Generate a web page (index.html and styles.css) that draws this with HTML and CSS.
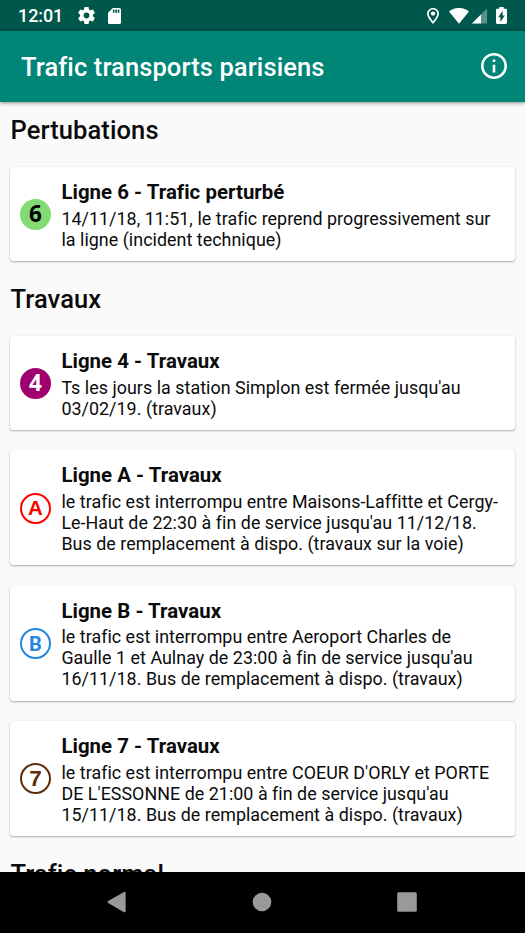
FILE: index.html
```html
<!DOCTYPE html>
<html lang="fr">
<head>
<meta charset="utf-8">
<title>Trafic transports parisiens</title>
<link rel="stylesheet" href="styles.css">
</head>
<body>
<div class="screen">
  <div class="status">
    <span class="clock">12:01</span>
    <svg class="gear" viewBox="2 2 20 20"><path d="M19.43 12.98c.04-.32.07-.64.07-.98s-.03-.66-.07-.98l2.11-1.65c.19-.15.24-.42.12-.64l-2-3.46c-.12-.22-.39-.3-.61-.22l-2.49 1c-.52-.4-1.08-.73-1.69-.98l-.38-2.65C14.46 2.18 14.25 2 14 2h-4c-.25 0-.46.18-.49.42l-.38 2.65c-.61.25-1.17.59-1.69.98l-2.49-1c-.23-.09-.49 0-.61.22l-2 3.46c-.13.22-.07.49.12.64l2.11 1.65c-.04.32-.07.65-.07.98s.03.66.07.98l-2.11 1.65c-.19.15-.24.42-.12.64l2 3.46c.12.22.39.3.61.22l2.49-1c.52.4 1.08.73 1.69.98l.38 2.65c.03.24.24.42.49.42h4c.25 0 .46-.18.49-.42l.38-2.65c.61-.25 1.17-.59 1.69-.98l2.49 1c.23.09.49 0 .61-.22l2-3.46c.12-.22.07-.49-.12-.64l-2.11-1.65zM12 15.5c-1.93 0-3.5-1.57-3.5-3.5s1.57-3.5 3.5-3.5 3.500 1.570 3.500 3.500-1.570 3.500-3.500 3.500z"/></svg>
    <svg class="sd" viewBox="4 2 16 20" preserveAspectRatio="none"><path d="M18 2h-8L4.020 8 4 20c0 1.100.9 2 2 2h12c1.100 0 2-.9 2-2V4c0-1.100-.9-2-2-2zm-6 6h-2V4h2v4zm3 0h-2V4h2v4zm3 0h-2V4h2v4z"/></svg>
    <svg class="pin" viewBox="5 2 14 20" preserveAspectRatio="none"><path d="M12 2C8.130 2 5 5.130 5 9c0 5.250 7 13 7 13s7-7.750 7-13c0-3.870-3.130-7-7-7zM7 9c0-2.760 2.240-5 5-5s5 2.240 5 5c0 2.880-2.880 7.190-5 9.880C9.920 16.210 7 11.850 7 9z"/><circle cx="12" cy="9" r="2.700"/></svg>
    <svg class="wifi" viewBox="0 0 20 16"><path d="M0 3.500C5.800-1.200 14.200-1.200 20 3.500L10 15.800z"/></svg>
    <svg class="signal" viewBox="0 0 16 16"><path opacity=".35" d="M0 16 16 0v16z"/><path d="M0 16 9.500 6.500V16z"/></svg>
    <svg class="battery" viewBox="7 2 10 20" preserveAspectRatio="none"><path d="M15.670 4H14V2h-4v2H8.330C7.600 4 7 4.600 7 5.330v15.330C7 21.400 7.600 22 8.330 22h7.330c.74 0 1.340-.6 1.340-1.330V5.330C17 4.600 16.400 4 15.670 4zM11 19.500V14H9l4-7.500V12h2z"/></svg>
  </div>
  <header class="appbar">
    <h1>Trafic transports parisiens</h1>
    <svg class="info" viewBox="2 2 20 20"><path d="M11 17h2v-6h-2v6zm1-15C6.480 2 2 6.480 2 12s4.480 10 10 10 10-4.480 10-10S17.520 2 12 2zm0 18c-4.410 0-8-3.590-8-8s3.590-8 8-8 8 3.590 8 8-3.590 8-8 8zM11 9h2V7h-2v2z"/></svg>
  </header>
  <main class="list">
    <h2>Pertubations</h2>
    <article class="card">
      <span class="badge l6">6</span>
      <div><h3>Ligne 6 - Trafic perturbé</h3>
      <p>14/11/18, 11:51, le trafic reprend progressivement sur<br>la ligne (incident technique)</p></div>
    </article>
    <h2>Travaux</h2>
    <article class="card">
      <span class="badge l4">4</span>
      <div><h3>Ligne 4 - Travaux</h3>
      <p>Ts les jours la station Simplon est fermée jusqu'au<br>03/02/19. (travaux)</p></div>
    </article>
    <article class="card">
      <span class="badge la">A</span>
      <div><h3>Ligne A - Travaux</h3>
      <p>le trafic est interrompu entre Maisons-Laffitte et Cergy-<br>Le-Haut de 22:30 à fin de service jusqu'au 11/12/18.<br>Bus de remplacement à dispo. (travaux sur la voie)</p></div>
    </article>
    <article class="card">
      <span class="badge lb">B</span>
      <div><h3>Ligne B - Travaux</h3>
      <p>le trafic est interrompu entre Aeroport Charles de<br>Gaulle 1 et Aulnay de 23:00 à fin de service jusqu'au<br>16/11/18. Bus de remplacement à dispo. (travaux)</p></div>
    </article>
    <article class="card">
      <span class="badge l7">7</span>
      <div><h3>Ligne 7 - Travaux</h3>
      <p>le trafic est interrompu entre COEUR D'ORLY et PORTE<br>DE L'ESSONNE de 21:00 à fin de service jusqu'au<br>15/11/18. Bus de remplacement à dispo. (travaux)</p></div>
    </article>
    <h2>Trafic normal</h2>
  </main>
  <nav class="navbar">
    <svg viewBox="0 0 20 22"><path d="M1.200 10 17 .9q1.600-.6 1.600 1v18.300q0 1.600-1.600 1L1.200 12q-1.300-1 0-2z"/></svg>
    <svg viewBox="0 0 20 22"><circle cx="10" cy="11" r="9.300"/></svg>
    <svg viewBox="0 0 20 22"><rect x=".2" y="1.200" width="19.600" height="19.600" rx="1.500"/></svg>
  </nav>
</div>
</body>
</html>
```
FILE: styles.css
```css
* { box-sizing: border-box; }
body { margin: 0; font-family: Roboto, sans-serif; color: #0b0b0b; background: #fafafa; }
h1, h2, h3, p { margin: 0; white-space: nowrap; }
svg { display: block; flex: none; }
.screen { display: flex; flex-direction: column; width: 525px; height: 933px; overflow: hidden; }
.status { flex: none; display: flex; align-items: center; height: 31px; padding: 0 18px; background: #00574b; color: #fff; }
.status svg { fill: #fff; }
.clock { width: 60px; font-size: 18px; font-weight: 500; line-height: 31px; letter-spacing: -.1px; }
.gear { width: 17px; height: 17px; }
.sd { width: 13px; height: 16px; margin-left: 13px; }
.pin { width: 12px; height: 16px; margin-left: auto; }
.wifi { width: 20px; height: 16px; margin-left: 10px; }
.signal { width: 15px; height: 16px; margin-left: 3px; }
.battery { width: 11px; height: 17px; margin-left: 9px; }
.appbar { flex: none; z-index: 1; display: flex; align-items: center; justify-content: space-between; height: 71px; padding: 0 18px 0 21px; background: #008577; color: #fff; box-shadow: 0 1px 4px rgba(0, 0, 0, .45); }
h1 { font-size: 25.500px; font-weight: 500; line-height: 30px; padding-top: 1px; letter-spacing: .1px; }
.info { width: 26px; height: 26px; margin-bottom: 1px; fill: #fff; }
.list { flex: 1; min-height: 0; overflow: hidden; padding: 13px 10px 0; }
h2 { font-size: 25.500px; font-weight: 500; line-height: 30px; letter-spacing: .1px; padding-left: .5px; margin-bottom: 22px; }
.card { display: flex; align-items: center; padding: 13px 10px 11.400px; margin-bottom: 20.300px; background: #fff; border-radius: 3px; box-shadow: 0 1px 2px rgba(0, 0, 0, .3), 0 0 1px rgba(0, 0, 0, .12); }
.card + h2 { margin-top: 23.200px; }
h3 { font-size: 20.400px; font-weight: 700; line-height: 24px; letter-spacing: .04px; margin-bottom: 3.600px; }
p { font-size: 17.860px; line-height: 21px; letter-spacing: .04px; }
.badge { flex: none; display: flex; align-items: center; justify-content: center; width: 31px; height: 31px; margin: 0 10.400px 1px 0; border-radius: 50%; font: 700 22.500px/1 "Noto Sans", sans-serif; }
.l6 { background: #82dc73; color: #000; }
.l4 { background: #a0006e; color: #fff; }
.la { border: 2px solid #f00; color: #f00; font: 700 20.500px/1 "Liberation Sans", sans-serif; }
.lb { border: 2px solid #1e88dc; color: #2686dc; font: 700 20px/1 Roboto, sans-serif; }
.l7 { border: 2px solid #5f2a0a; color: #5f3010; font: 700 22.500px/1 "Liberation Sans", sans-serif; }
.navbar { flex: none; display: flex; align-items: center; justify-content: center; gap: 125px; height: 61px; padding: 0 2px 2px 0; background: #000; }
.navbar svg { width: 20px; height: 22px; fill: #999; }
```
